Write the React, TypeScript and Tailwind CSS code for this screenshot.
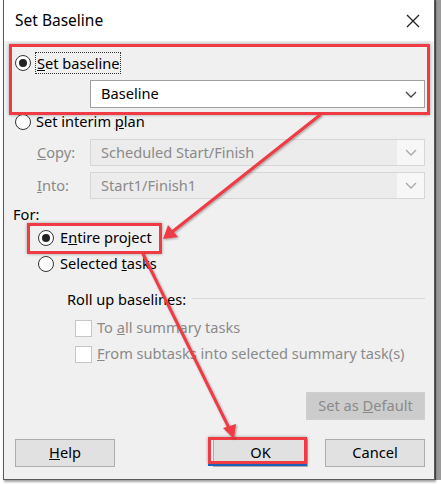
import React from 'react';

const font = { fontFamily: '"Noto Sans", "Open Sans", sans-serif' };

const Radio = ({ checked, disabled }: { checked?: boolean; disabled?: boolean }) => (
  <span
    className={`inline-flex items-center justify-center w-[16px] h-[16px] rounded-full border bg-white shrink-0 ${
      disabled ? 'border-[#bcbcbc]' : 'border-[#333]'
    }`}
  >
    {checked && <span className="w-[8px] h-[8px] rounded-full bg-[#222]" />}
  </span>
);

const Check = () => (
  <span className="inline-block w-[17px] h-[17px] border border-[#c6c6c6] bg-white shrink-0" />
);

const Chevron = ({ disabled }: { disabled?: boolean }) => (
  <svg width="12" height="7" viewBox="0 0 12 7" className="shrink-0">
    <path d="M1 1l5 5 5-5" fill="none" stroke={disabled ? '#a8a8a8' : '#444'} strokeWidth="1.3" />
  </svg>
);

const Select = ({ value, disabled }: { value: string; disabled?: boolean }) => (
  <div
    className={`flex items-center h-full w-full border ${
      disabled ? 'border-[#d6d6d6] bg-[#f7f7f7] text-[#8a8a8a]' : 'border-[#a0a0a0] bg-white text-black'
    }`}
  >
    <div className={`flex-1 h-full flex items-center pl-[10px] ${disabled ? 'bg-[#ececec]' : ''}`}>{value}</div>
    <div className="w-[27px] h-full flex items-center justify-center">
      <Chevron disabled={disabled} />
    </div>
  </div>
);

const Btn = ({ children, disabled, className = '' }: { children: React.ReactNode; disabled?: boolean; className?: string }) => (
  <div
    className={`flex items-center justify-center h-[28px] border ${
      disabled ? 'border-[#cfcfcf] bg-[#cccccc] text-[#8a8a8a]' : 'border-[#adadad] bg-[#e1e1e1] text-black'
    } ${className}`}
  >
    <span>{children}</span>
  </div>
);

export default function App() {
  return (
    <div className="relative w-[441px] h-[484px] bg-white overflow-hidden text-[14.6px]" style={font}>
      {/* window behind, right edge */}
      <div className="absolute right-0 top-0 w-[6px] h-[480px] bg-[#9a9a9a] border-l border-[#555]" />

      <div className="absolute left-[3px] top-[-1px] w-[432px] h-[481px] border border-[#5a5a5a] shadow-[1px_2px_2px_rgba(0,0,0,0.35)] flex flex-col">
        {/* title bar */}
        <div className="h-[41px] bg-white flex items-center justify-between pl-[11px] pr-[14px] shrink-0">
          <span className="text-[15.5px] text-black">Set Baseline</span>
          <svg width="14" height="14" viewBox="0 0 14 14">
            <path d="M1 1l12 12M13 1L1 13" stroke="#222" strokeWidth="1.3" />
          </svg>
        </div>

        {/* body */}
        <div className="flex-1 bg-[#f0f0f0] flex flex-col pl-[9px] pr-[9px] pt-[10px]">
          <div className="h-[24px] flex items-center gap-[4px] pl-[2px]">
            <Radio checked />
            <span className="border border-dotted border-[#333] px-[1px] leading-[20px]">
              <u>S</u>et baseline
            </span>
          </div>
          <div className="h-[28px] mt-[5px] pl-[77px]">
            <Select value="Baseline" />
          </div>

          <div className="h-[24px] mt-[2px] flex items-center gap-[5px] pl-[2px]">
            <Radio />
            <span>
              Set interim <u>p</u>lan
            </span>
          </div>
          <div className="h-[27px] mt-[5px] flex items-center">
            <span className="w-[77px] pl-[24px] text-[#8a8a8a]">
              <u>C</u>opy:
            </span>
            <div className="flex-1 h-full">
              <Select value="Scheduled Start/Finish" disabled />
            </div>
          </div>
          <div className="h-[27px] mt-[6px] flex items-center">
            <span className="w-[77px] pl-[24px] text-[#8a8a8a]">
              <u>I</u>nto:
            </span>
            <div className="flex-1 h-full">
              <Select value="Start1/Finish1" disabled />
            </div>
          </div>

          <div className="h-[22px] mt-[5px] flex items-center">For:</div>
          <div className="h-[22px] mt-[1px] flex items-center gap-[6px] pl-[25px]">
            <Radio checked />
            <span>
              E<u>n</u>tire project
            </span>
          </div>
          <div className="h-[22px] mt-[4px] flex items-center gap-[6px] pl-[25px]">
            <Radio />
            <span>
              Selected <u>t</u>asks
            </span>
          </div>

          <div className="h-[22px] mt-[14px] flex items-center gap-[6px] pl-[54px]">
            <span>Roll up baselines:</span>
            <div className="flex-1 h-px bg-[#d8d8d8] mt-[-3px]" />
          </div>
          <div className="h-[22px] mt-[6px] flex items-center gap-[5px] pl-[62px] text-[#8a8a8a]">
            <Check />
            <span>
              To <u>a</u>ll summary tasks
            </span>
          </div>
          <div className="h-[22px] mt-[4px] flex items-center gap-[5px] pl-[62px] text-[#8a8a8a]">
            <Check />
            <span>
              <u>F</u>rom subtasks into selected summary task(s)
            </span>
          </div>

          <div className="mt-[27px] flex justify-end">
            <Btn disabled className="w-[119px]">
              Set as <u>D</u>efault
            </Btn>
          </div>

          <div className="mt-[19px] flex items-center justify-between">
            <Btn className="w-[100px] ml-[2px]">
              <u>H</u>elp
            </Btn>
            <div className="flex items-center gap-[17px]">
              <Btn className="w-[95px] border-[#0078d7]">OK</Btn>
              <Btn className="w-[100px]">Cancel</Btn>
            </div>
          </div>
        </div>
      </div>

      {/* annotations */}
      <div className="absolute left-[9px] top-[44px] w-[421px] h-[71px] border-[3px] border-[#ee3b44] shadow-[0_0_3px_rgba(0,0,0,0.35)]" />
      <div className="absolute left-[27px] top-[223px] w-[135px] h-[31px] border-[3px] border-[#ee3b44] shadow-[0_0_3px_rgba(0,0,0,0.35)]" />
      <div className="absolute left-[208px] top-[437px] w-[99px] h-[27px] border-[3px] border-[#ee3b44] shadow-[0_0_3px_rgba(0,0,0,0.35)]" />
      <div className="absolute left-[208px] top-[464px] w-[99px] h-[2px] bg-[#1f5fb8]" />

      <svg className="absolute inset-0 pointer-events-none" width="441" height="484">
        <defs>
          <filter id="sh" x="-10%" y="-10%" width="120%" height="120%">
            <feDropShadow dx="1" dy="1" stdDeviation="1" floodColor="#000" floodOpacity="0.35" />
          </filter>
        </defs>
        <g filter="url(#sh)" stroke="#ee3b44" strokeWidth="3" fill="#ee3b44" strokeLinecap="round">
          <line x1="320" y1="115" x2="172" y2="232" />
          <polygon points="163,239 168,225 178,237" stroke="none" />
          <line x1="143" y1="254" x2="229" y2="428" />
          <polygon points="234,439 223,428 236,424" stroke="none" />
        </g>
      </svg>
    </div>
  );
}
